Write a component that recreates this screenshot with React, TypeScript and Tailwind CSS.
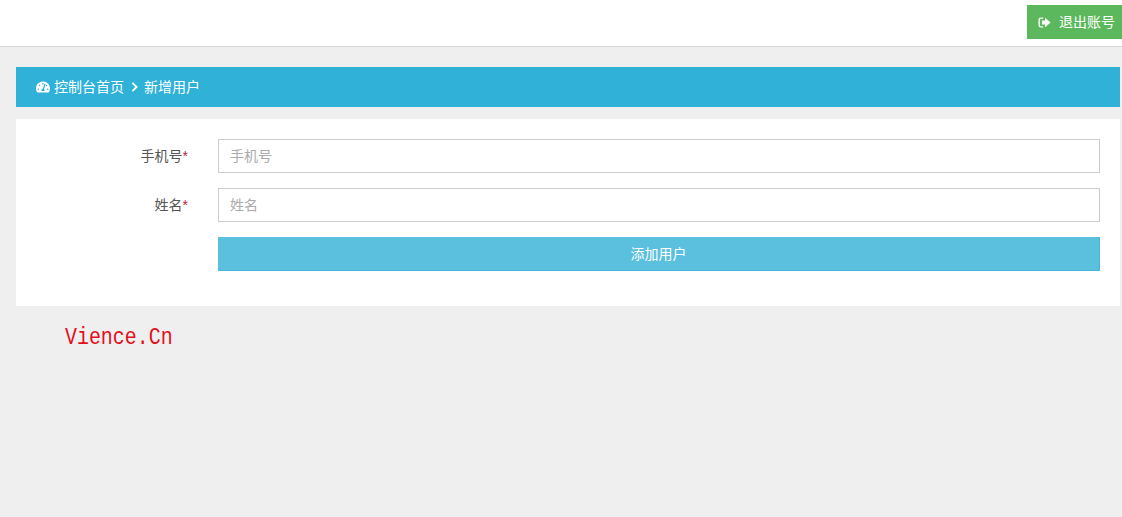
import React from 'react'
import { FaTachometerAlt } from 'react-icons/fa'

const SignOutIcon = () => (
  <svg viewBox="0 0 14 14" className="h-[13px] w-[13px]" fill="currentColor">
    <path d="M5.5 1.5H3A2.5 2.5 0 0 0 .5 4v6A2.5 2.5 0 0 0 3 12.5h2.5v-1.5H3a1 1 0 0 1-1-1V4a1 1 0 0 1 1-1h2.5z" />
    <path d="M7.6 1.8 13.6 7l-6 5.2V9.2H4.2V4.8h3.4z" />
  </svg>
)

const Field = ({ label, placeholder }: { label: string; placeholder: string }) => (
  <div className="mb-[15px] flex items-center">
    <label className="w-[172px] text-right text-sm text-[#555]">
      {label}
      <span className="text-[#b5234a]">*</span>
    </label>
    <input
      placeholder={placeholder}
      readOnly
      className="ml-[30px] h-[34px] w-[882px] border border-[#ccc] bg-white px-[11px] text-sm outline-none placeholder:text-[#aaa]"
    />
  </div>
)

export default function App() {
  return (
    <div
      className="h-[517px] w-[1122px] overflow-hidden bg-[#efefef]"
      style={{ fontFamily: '"Liberation Sans", "Noto Sans CJK SC", sans-serif' }}
    >
      <header className="flex h-[47px] items-start justify-end border-b border-[#d6d6d6] bg-white pt-[5px]">
        <button className="flex h-[34px] w-[95px] items-center gap-[8px] bg-[#5cb85c] pl-[11px] text-sm text-white">
          <SignOutIcon />
          退出账号
        </button>
      </header>

      <main className="ml-[16px] mr-[2px] pt-[20px]">
        <nav className="flex h-[40px] items-center bg-[#2fb1d8] pl-[20px] text-sm text-white">
          <FaTachometerAlt className="h-[14px] w-[14px]" />
          <span className="ml-[4px]">控制台首页</span>
          <svg viewBox="0 0 8 12" className="ml-[7px] h-[10px] w-[7px]" fill="none" stroke="currentColor" strokeWidth="2.2">
            <path d="M1.5 1 6.5 6l-5 5" />
          </svg>
          <span className="ml-[6px]">新增用户</span>
        </nav>

        <section className="mt-[12px] h-[187px] bg-white pt-[20px]">
          <Field label="手机号" placeholder="手机号" />
          <Field label="姓名" placeholder="姓名" />
          <div className="pl-[202px]">
            <button className="h-[34px] w-[882px] border-b border-r border-[#46b8da] bg-[#5bc0de] text-sm text-white">
              添加用户
            </button>
          </div>
        </section>

        <p
          className="ml-[49px] mt-[17px] origin-left scale-x-[0.83] text-[24px] leading-[30px] text-[#e3101c]"
          style={{ fontFamily: '"Liberation Mono", monospace' }}
        >
          Vience.Cn
        </p>
      </main>
    </div>
  )
}
